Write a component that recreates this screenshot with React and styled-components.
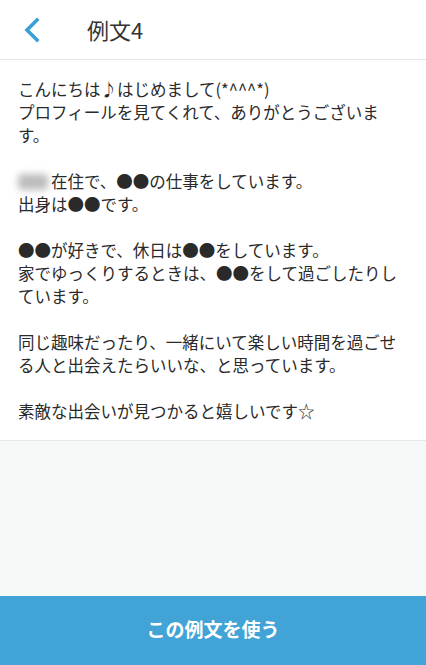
import React from "react";
import styled, { createGlobalStyle } from "styled-components";

const Global = createGlobalStyle`
  html, body { margin: 0; padding: 0; }
  body {
    font-family: "Noto Sans CJK JP", "Noto Sans", sans-serif;
    background: #f7f8f8;
  }
`;

const Page = styled.div`
  width: 426px;
  height: 665px;
  display: flex;
  flex-direction: column;
  background: #f7f8f8;
  overflow: hidden;
`;

const Header = styled.header`
  height: 60px;
  flex: none;
  display: flex;
  align-items: center;
  background: #fff;
  border-bottom: 1px solid #e4e4e4;
  box-sizing: border-box;
`;

const BackButton = styled.button`
  width: 68px;
  height: 60px;
  border: 0;
  background: none;
  padding: 0 0 0 24px;
  display: flex;
  align-items: center;
  cursor: pointer;
`;

const Title = styled.h1`
  margin: 0 0 2px 19px;
  font-size: 22px;
  font-weight: 400;
  color: #333;
`;

const Body = styled.main`
  background: #fff;
  border-bottom: 1px solid #e6e8e8;
  padding: 18px 18px 17px 18px;
`;

const Para = styled.p`
  margin: 0;
  font-size: 16.5px;
  line-height: 23px;
  color: #2a2a2a;
  white-space: pre-wrap;
  word-break: normal;
  line-break: strict;
`;

const Blur = styled.span`
  display: inline-block;
  width: 30px;
  height: 16px;
  margin-right: 3px;
  vertical-align: -2px;
  background: #bdbdbd;
  filter: blur(3.5px);
  border-radius: 4px;
`;

const Spacer = styled.div`
  flex: 1;
`;

const UseButton = styled.button`
  flex: none;
  height: 69px;
  border: 0;
  background: #42a3d6;
  color: #fff;
  font-family: "Noto Sans CJK JP", sans-serif;
  font-size: 19px;
  font-weight: 700;
  padding: 0 0 4px 0;
  cursor: pointer;
`;

export default function App() {
  return (
    <>
      <Global />
      <Page>
        <Header>
          <BackButton aria-label="戻る">
            <svg width="16" height="26" viewBox="0 0 16 26">
              <path d="M13 3 L3 13 L13 23" fill="none" stroke="#3a9fd6" strokeWidth="3.6" strokeLinecap="square" />
            </svg>
          </BackButton>
          <Title>例文4</Title>
        </Header>
        <Body>
          <Para>
            {"こんにちは♪はじめまして(*^^^*)\nプロフィールを見てくれて、ありがとうございます。\n\n"}
            <Blur />
            {"在住で、●●の仕事をしています。\n出身は●●です。\n\n●●が好きで、休日は●●をしています。\n家でゆっくりするときは、●●をして過ごしたりしています。\n\n同じ趣味だったり、一緒にいて楽しい時間を過ごせる人と出会えたらいいな、と思っています。\n\n素敵な出会いが見つかると嬉しいです☆"}
          </Para>
        </Body>
        <Spacer />
        <UseButton>この例文を使う</UseButton>
      </Page>
    </>
  );
}
